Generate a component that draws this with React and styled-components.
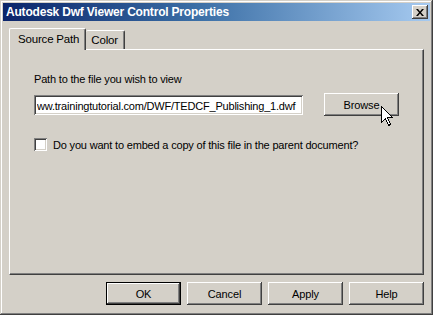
import styled, { createGlobalStyle } from 'styled-components';

const Global = createGlobalStyle`
  html, body {
    margin: 0;
    padding: 0;
    background: #d4d0c8;
  }
  body {
    font-family: "Liberation Sans", Arial, sans-serif;
    font-size: 11px;
    letter-spacing: -0.18px;
    color: #000;
  }
`;

const Window = styled.div`
  position: relative;
  width: 433px;
  height: 315px;
  box-sizing: border-box;
  padding: 3px;
  background: #d4d0c8;
  box-shadow:
    inset -1px -1px #404040,
    inset 1px 1px #d4d0c8,
    inset -2px -2px #808080,
    inset 2px 2px #ffffff;
  display: flex;
  flex-direction: column;
`;

const TitleBar = styled.div`
  height: 18px;
  background: linear-gradient(90deg, #0a246a 0%, #3a6ea5 45%, #a6caf0 100%);
  display: flex;
  align-items: center;
  justify-content: space-between;
  padding: 0 2px 0 3px;
`;

const TitleText = styled.span`
  color: #fff;
  font-weight: bold;
  font-size: 12px;
  letter-spacing: -0.2px;
`;

const CloseButton = styled.div`
  width: 16px;
  height: 14px;
  box-sizing: border-box;
  background: #d4d0c8;
  box-shadow:
    inset -1px -1px #404040,
    inset 1px 1px #ffffff,
    inset -2px -2px #808080;
  display: flex;
  align-items: center;
  justify-content: center;
`;

const Body = styled.div`
  flex: 1;
  padding: 7px 6px 0 6px;
  display: flex;
  flex-direction: column;
`;

const TabStrip = styled.div`
  display: flex;
  align-items: flex-end;
  height: 21px;
  position: relative;
  z-index: 1;
`;

const Tab = styled.div`
  box-sizing: border-box;
  height: ${p => (p.$active ? '22px' : '19px')};
  margin-bottom: ${p => (p.$active ? '-1px' : '0')};
  padding: ${p => (p.$active ? '3px 6px 0 8px' : '2px 6px 0 5px')};
  background: #d4d0c8;
  border-left: ${p => (p.$active ? '1px solid #fff' : 'none')};
  border-top: 1px solid #fff;
  border-right: 1px solid #404040;
  border-radius: 2px 2px 0 0;
  box-shadow: inset -1px 0 #808080;
  font-size: 11.5px;
  line-height: 14px;
  white-space: nowrap;
`;

const Panel = styled.div`
  height: 226px;
  box-sizing: border-box;
  background: #d4d0c8;
  border-top: 1px solid #fff;
  border-left: 1px solid #fff;
  border-right: 1px solid #404040;
  border-bottom: 1px solid #404040;
  box-shadow: inset -1px -1px #808080;
  padding: 22px 24px 0 24px;
  display: flex;
  flex-direction: column;
`;

const Label = styled.div`
  line-height: 14px;
  margin-bottom: 7px;
`;

const PathRow = styled.div`
  display: flex;
  align-items: center;
  gap: 21px;
`;

const PathInput = styled.input`
  width: 269px;
  height: 20px;
  box-sizing: border-box;
  border: none;
  outline: none;
  padding: 2px 2px 0 3px;
  background: #fff;
  font-family: "Liberation Sans", Arial, sans-serif;
  font-size: 11px;
  letter-spacing: -0.2px;
  color: #000;
  box-shadow:
    inset 1px 1px #808080,
    inset -1px -1px #ffffff,
    inset 2px 2px #404040,
    inset -2px -2px #d4d0c8;
`;

const Button = styled.button`
  width: 75px;
  height: 23px;
  box-sizing: border-box;
  padding: 0;
  border: ${p => (p.$default ? '1px solid #000' : 'none')};
  background: #d4d0c8;
  font-family: "Liberation Sans", Arial, sans-serif;
  font-size: 11px;
  letter-spacing: -0.1px;
  color: #000;
  box-shadow: ${p =>
    p.$default
      ? 'inset -1px -1px #404040, inset 1px 1px #ffffff, inset -2px -2px #808080'
      : 'inset -1px -1px #404040, inset 1px 1px #ffffff, inset -2px -2px #808080, inset 2px 2px #d4d0c8'};
`;

const CheckRow = styled.label`
  display: flex;
  align-items: center;
  gap: 6px;
  margin-top: 22px;
`;

const CheckBox = styled.span`
  width: 13px;
  height: 13px;
  box-sizing: border-box;
  background: #fff;
  box-shadow:
    inset 1px 1px #808080,
    inset -1px -1px #ffffff,
    inset 2px 2px #404040,
    inset -2px -2px #d4d0c8;
`;

const ButtonRow = styled.div`
  display: flex;
  justify-content: flex-end;
  gap: 6px;
  margin-top: 7px;
`;

const Cursor = styled.svg`
  position: absolute;
  left: 381px;
  top: 106px;
`;

export default function App() {
  return (
    <>
      <Global />
      <Window>
        <TitleBar>
          <TitleText>Autodesk Dwf Viewer Control Properties</TitleText>
          <CloseButton>
            <svg width="8" height="7" viewBox="0 0 8 7">
              <path d="M0 0h2l2 2.5L6 0h2L5 3.5 8 7H6L4 4.5 2 7H0l3-3.5z" fill="#000" />
            </svg>
          </CloseButton>
        </TitleBar>
        <Body>
          <TabStrip>
            <Tab $active>Source Path</Tab>
            <Tab>Color</Tab>
          </TabStrip>
          <Panel>
            <Label>Path to the file you wish to view</Label>
            <PathRow>
              <PathInput readOnly value="ww.trainingtutorial.com/DWF/TEDCF_Publishing_1.dwf" />
              <Button>Browse</Button>
            </PathRow>
            <CheckRow>
              <CheckBox />
              <span>Do you want to embed a copy of this file in the parent document?</span>
            </CheckRow>
          </Panel>
          <ButtonRow>
            <Button $default>OK</Button>
            <Button>Cancel</Button>
            <Button>Apply</Button>
            <Button>Help</Button>
          </ButtonRow>
        </Body>
        <Cursor width="13" height="22" viewBox="0 0 13 22">
          <path
            d="M0.5 0.5 L0.5 16.5 L4.5 12.5 L7.5 19.5 L9.5 18.5 L6.5 11.5 L11.5 11.5 Z"
            fill="#fff"
            stroke="#000"
            strokeWidth="1"
            shapeRendering="crispEdges"
          />
        </Cursor>
      </Window>
    </>
  );
}
